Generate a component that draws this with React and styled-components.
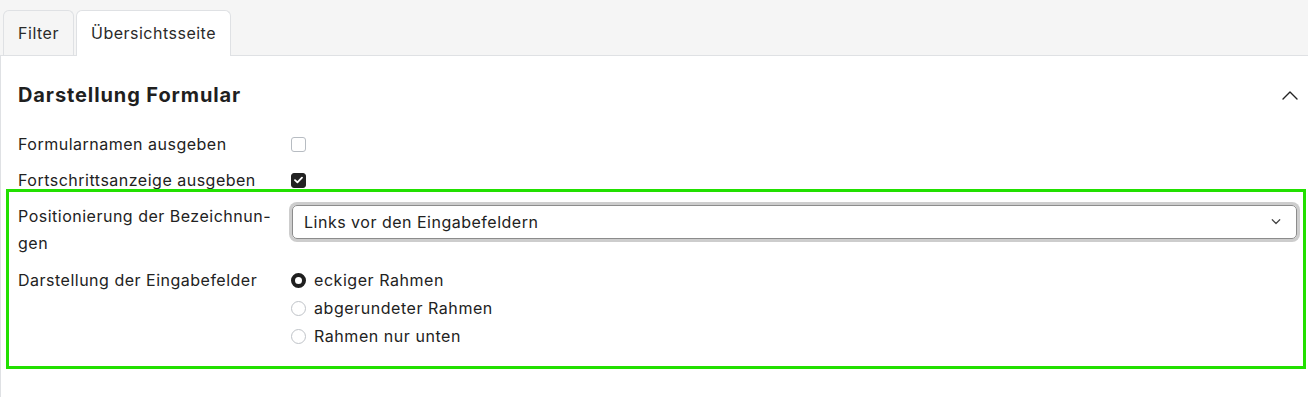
import React from "react";
import styled, { createGlobalStyle } from "styled-components";

const Global = createGlobalStyle`
  html, body { margin: 0; padding: 0; }
  body {
    background: #f5f5f5;
    font-family: Inter, "Noto Sans", sans-serif;
    color: #212121;
    -webkit-font-smoothing: antialiased;
  }
`;

const Page = styled.div`
  width: 1308px;
  height: 397px;
  display: flex;
  flex-direction: column;
  overflow: hidden;
`;

const TabBar = styled.div`
  display: flex;
  gap: 2px;
  padding: 10px 0 0 3px;
  border-bottom: 1px solid #dfe1e4;
  height: 45px;
`;

const Tab = styled.div`
  box-sizing: border-box;
  height: ${(p) => (p.$active ? "46px" : "45px")};
  display: flex;
  align-items: center;
  justify-content: center;
  width: ${(p) => p.$w}px;
  font-size: 16px;
  letter-spacing: 0.5px;
  color: #2a2a2a;
  background: ${(p) => (p.$active ? "#ffffff" : "#f5f5f5")};
  border: 1px solid #dfe1e4;
  border-bottom: none;
  border-radius: 6px 6px 0 0;
  margin-bottom: ${(p) => (p.$active ? "-1px" : "0")};
  padding-bottom: ${(p) => (p.$active ? "1px" : "0")};
`;

const Panel = styled.div`
  flex: 1;
  background: #ffffff;
  border-left: 1px solid #dfe1e4;
  padding: 0 8px 0 17px;
  display: flex;
  flex-direction: column;
`;

const Header = styled.div`
  height: 30px;
  margin-top: 24px;
  display: flex;
  align-items: center;
  justify-content: space-between;
  padding-right: 2px;
`;

const Title = styled.h2`
  margin: 0;
  font-size: 20px;
  font-weight: 700;
  letter-spacing: 0.9px;
  color: #1f1f1f;
`;

const Row = styled.div`
  display: grid;
  grid-template-columns: 272px 1fr;
  align-items: ${(p) => (p.$top ? "start" : "center")};
`;

const SimpleRow = styled(Row)`
  height: 20px;
  margin-top: ${(p) => p.$mt}px;
`;

const Label = styled.div`
  font-size: 16px;
  letter-spacing: 0.5px;
  line-height: ${(p) => p.$lh || 20}px;
  color: #222;
  padding-right: 2px;
  white-space: nowrap;
  margin-top: ${(p) => p.$mt || 0}px;
`;

const Checkbox = styled.span`
  box-sizing: border-box;
  width: 15px;
  height: 15px;
  margin-left: 1px;
  border-radius: 3px;
  border: 1px solid ${(p) => (p.$checked ? "#222" : "#b7bcc2")};
  background: ${(p) => (p.$checked ? "#222" : "#fff")};
  display: flex;
  align-items: center;
  justify-content: center;
`;

const Group = styled.div`
  margin: -1px -6px 0 -12px;
  border: 3px solid #22e000;
  padding: 9px 3px 16px 9px;
  display: flex;
  flex-direction: column;
  gap: 9px;
`;

const Select = styled.div`
  box-sizing: border-box;
  height: 34px;
  margin: 4px 3px 0 2px;
  border: 1px solid #8c8c8c;
  border-radius: 5px;
  box-shadow: 0 0 0 3px #cdcdcd;
  display: flex;
  align-items: center;
  justify-content: space-between;
  padding: 0 14px 0 11px;
  font-size: 16px;
  letter-spacing: 0.5px;
  color: #222;
`;

const Radios = styled.div`
  display: flex;
  flex-direction: column;
`;

const RadioOption = styled.label`
  display: flex;
  align-items: center;
  gap: 8px;
  height: 28px;
  font-size: 16px;
  letter-spacing: 0.55px;
  color: #222;
`;

const RadioDot = styled.span`
  box-sizing: border-box;
  width: 15px;
  height: 15px;
  margin-left: 1px;
  border-radius: 50%;
  border: ${(p) => (p.$checked ? "4.5px solid #1f1f1f" : "1px solid #bfc3c8")};
  background: #fff;
`;

const Chevron = ({ up, size = 16, color = "#222", w = 1.6 }) => (
  <svg width={size} height={size / 2 + 2} viewBox="0 0 16 10" fill="none">
    <polyline
      points={up ? "1,9 8,2 15,9" : "3,2 8,7 13,2"}
      stroke={color}
      strokeWidth={w}
      strokeLinecap="round"
      strokeLinejoin="round"
    />
  </svg>
);

const Check = () => (
  <svg width="9" height="8" viewBox="0 0 9 8" fill="none">
    <polyline points="1,4.2 3.4,6.4 8,1.6" stroke="#fff" strokeWidth="1.8" strokeLinecap="round" strokeLinejoin="round" />
  </svg>
);

export default function App() {
  return (
    <Page>
      <Global />
      <TabBar>
        <Tab $w={71}>Filter</Tab>
        <Tab $w={155} $active>Übersichtsseite</Tab>
      </TabBar>
      <Panel>
        <Header>
          <Title>Darstellung Formular</Title>
          <Chevron up w={1.4} />
        </Header>
        <SimpleRow $mt={24}>
          <Label>Formularnamen ausgeben</Label>
          <Checkbox />
        </SimpleRow>
        <SimpleRow $mt={16}>
          <Label>Fortschrittsanzeige ausgeben</Label>
          <Checkbox $checked>
            <Check />
          </Checkbox>
        </SimpleRow>
        <Group>
          <Row $top>
            <Label $lh={27} $mt={2}>Positionierung der Bezeichnun-<br />gen</Label>
            <Select>
              <span>Links vor den Eingabefeldern</span>
              <Chevron size={12} color="#444" w={1.6} />
            </Select>
          </Row>
          <Row $top>
            <Label $lh={28}>Darstellung der Eingabefelder</Label>
            <Radios>
              <RadioOption>
                <RadioDot $checked />
                eckiger Rahmen
              </RadioOption>
              <RadioOption>
                <RadioDot />
                abgerundeter Rahmen
              </RadioOption>
              <RadioOption>
                <RadioDot />
                Rahmen nur unten
              </RadioOption>
            </Radios>
          </Row>
        </Group>
      </Panel>
    </Page>
  );
}
